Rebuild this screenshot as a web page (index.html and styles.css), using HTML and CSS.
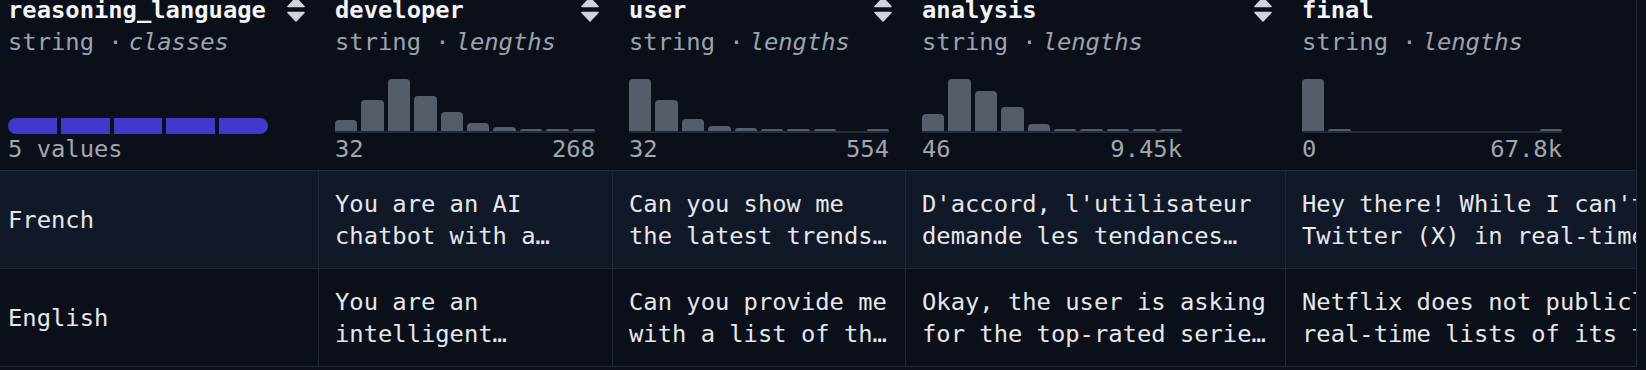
FILE: index.html
```html
<!DOCTYPE html>
<html lang="en">
<head>
    <meta charset="UTF-8">
    <meta name="viewport" content="width=device-width, initial-scale=1.0">
    <title>Dataset Viewer</title>
    <link rel="stylesheet" href="styles.css">
</head>
<body>
    <div class="viewer">
        <div class="table">
            <!-- header -->
            <div class="th first">
                <div class="th-top">
                    <span class="col-name">reasoning_language</span>
                    <svg class="sort" viewBox="0 0 18 25"><path d="M9 1 L17 9.5 L1 9.5 Z"/><path d="M1 15.5 L17 15.5 L9 24 Z"/></svg>
                </div>
                <div class="col-type">string <span class="sep">·</span><em>classes</em></div>
                <div class="chart classes">
                    <div class="class-bar">
                        <span></span><span></span><span></span><span></span><span></span>
                    </div>
                </div>
                <div class="range"><span>5 values</span></div>
            </div>

            <div class="th">
                <div class="th-top">
                    <span class="col-name">developer</span>
                    <svg class="sort" viewBox="0 0 18 25"><path d="M9 1 L17 9.5 L1 9.5 Z"/><path d="M1 15.5 L17 15.5 L9 24 Z"/></svg>
                </div>
                <div class="col-type">string <span class="sep">·</span><em>lengths</em></div>
                <div class="chart hist">
                    <div class="bar" style="height:11px"></div>
                    <div class="bar" style="height:31px"></div>
                    <div class="bar" style="height:52px"></div>
                    <div class="bar" style="height:35px"></div>
                    <div class="bar" style="height:19px"></div>
                    <div class="bar" style="height:8px"></div>
                    <div class="bar" style="height:4px"></div>
                    <div class="bar" style="height:2px"></div>
                    <div class="bar" style="height:2px"></div>
                    <div class="bar" style="height:2px"></div>
                </div>
                <div class="range"><span>32</span><span>268</span></div>
            </div>

            <div class="th">
                <div class="th-top">
                    <span class="col-name">user</span>
                    <svg class="sort" viewBox="0 0 18 25"><path d="M9 1 L17 9.5 L1 9.5 Z"/><path d="M1 15.5 L17 15.5 L9 24 Z"/></svg>
                </div>
                <div class="col-type">string <span class="sep">·</span><em>lengths</em></div>
                <div class="chart hist">
                    <div class="bar" style="height:52px"></div>
                    <div class="bar" style="height:31px"></div>
                    <div class="bar" style="height:12px"></div>
                    <div class="bar" style="height:5px"></div>
                    <div class="bar" style="height:3px"></div>
                    <div class="bar" style="height:2px"></div>
                    <div class="bar" style="height:2px"></div>
                    <div class="bar" style="height:2px"></div>
                    <div class="bar" style="height:0px"></div>
                    <div class="bar" style="height:2px"></div>
                </div>
                <div class="range"><span>32</span><span>554</span></div>
            </div>

            <div class="th">
                <div class="th-top">
                    <span class="col-name">analysis</span>
                    <svg class="sort" viewBox="0 0 18 25"><path d="M9 1 L17 9.5 L1 9.5 Z"/><path d="M1 15.5 L17 15.5 L9 24 Z"/></svg>
                </div>
                <div class="col-type">string <span class="sep">·</span><em>lengths</em></div>
                <div class="chart hist">
                    <div class="bar" style="height:17px"></div>
                    <div class="bar" style="height:52px"></div>
                    <div class="bar" style="height:40px"></div>
                    <div class="bar" style="height:24px"></div>
                    <div class="bar" style="height:7px"></div>
                    <div class="bar" style="height:2px"></div>
                    <div class="bar" style="height:2px"></div>
                    <div class="bar" style="height:2px"></div>
                    <div class="bar" style="height:2px"></div>
                    <div class="bar" style="height:2px"></div>
                </div>
                <div class="range"><span>46</span><span>9.45k</span></div>
            </div>

            <div class="th">
                <div class="th-top">
                    <span class="col-name">final</span>
                    <svg class="sort" viewBox="0 0 18 25"><path d="M9 1 L17 9.5 L1 9.5 Z"/><path d="M1 15.5 L17 15.5 L9 24 Z"/></svg>
                </div>
                <div class="col-type">string <span class="sep">·</span><em>lengths</em></div>
                <div class="chart hist">
                    <div class="bar" style="height:52px"></div>
                    <div class="bar" style="height:2px"></div>
                    <div class="bar" style="height:0px"></div>
                    <div class="bar" style="height:0px"></div>
                    <div class="bar" style="height:0px"></div>
                    <div class="bar" style="height:0px"></div>
                    <div class="bar" style="height:0px"></div>
                    <div class="bar" style="height:0px"></div>
                    <div class="bar" style="height:0px"></div>
                    <div class="bar" style="height:2px"></div>
                </div>
                <div class="range"><span>0</span><span>67.8k</span></div>
            </div>

            <!-- row 1 -->
            <div class="td first odd"><div class="clamp">French</div></div>
            <div class="td odd"><div class="clamp">You are an AI chatbot with a specific personality and tone.</div></div>
            <div class="td odd"><div class="clamp">Can you show me the latest trends on Twitter right now?</div></div>
            <div class="td odd"><div class="clamp">D'accord, l'utilisateur demande les tendances actuelles sur Twitter.</div></div>
            <div class="td odd"><div class="clamp">Hey there! While I can't check Twitter (X) in real-time, here is what I know.</div></div>

            <!-- row 2 -->
            <div class="td first"><div class="clamp">English</div></div>
            <div class="td"><div class="clamp">You are an intelligent assistant that answers questions.</div></div>
            <div class="td"><div class="clamp">Can you provide me with a list of the top rated series on Netflix?</div></div>
            <div class="td"><div class="clamp">Okay, the user is asking for the top-rated series on Netflix right now.</div></div>
            <div class="td"><div class="clamp">Netflix does not publicly post real-time lists of its top shows.</div></div>
        </div>
    </div>
</body>
</html>
```

FILE: styles.css
```css
* {
    margin: 0;
    padding: 0;
    box-sizing: border-box;
}

body {
    background: #0b0f19;
    color: #e5e7eb;
    font-family: 'DejaVu Sans Mono', 'Liberation Mono', monospace;
    font-size: 23.8px;
    overflow: hidden;
}

.viewer {
    width: 1637px;
    overflow: hidden;
    border-right: 1px solid #1f2937;
}

.table {
    display: grid;
    grid-template-columns: 318px 294px 293px 380px 480px;
    grid-template-rows: 171px 98px 98px;
    width: max-content;
}

/* header cells */
.th {
    padding: 0 13px 0 17px;
    border-bottom: 1px solid #1f2937;
}

.th.first {
    padding-left: 8px;
}

.th-top {
    display: flex;
    justify-content: space-between;
    align-items: flex-start;
    height: 20px;
}

.col-name {
    font-weight: bold;
    color: #f3f4f6;
    line-height: 20px;
}

.sort {
    width: 18px;
    height: 25px;
    margin-top: -3px;
    fill: #d1d5db;
    stroke: #d1d5db;
    stroke-width: 1.5;
    stroke-linejoin: round;
}

.col-type {
    margin-top: 6px;
    line-height: 32px;
    color: #9ca3af;
    white-space: nowrap;
}

.col-type em {
    font-style: italic;
}

.sep {
    margin-right: 6px;
}

.chart {
    width: 260px;
    height: 75px;
}

.hist {
    display: flex;
    align-items: flex-end;
    gap: 4px;
    border-bottom: 2px solid #232b3a;
}

.bar {
    flex: 1;
    background: #565d6a;
    border-radius: 4px 4px 0 0;
}

.classes {
    display: flex;
    align-items: flex-end;
}

.class-bar {
    display: flex;
    gap: 4px;
    width: 260px;
    height: 16px;
    margin-bottom: -1px;
}

.class-bar span {
    flex: 1;
    background: #4338ca;
}

.class-bar span:first-child {
    border-radius: 8px 0 0 8px;
}

.class-bar span:last-child {
    border-radius: 0 8px 8px 0;
}

.range {
    display: flex;
    justify-content: space-between;
    width: 260px;
    line-height: 32px;
    color: #a1a6b0;
}

/* body cells */
.td {
    display: flex;
    align-items: center;
    padding: 17px 12px 16px 16px;
    border-left: 1px solid #1f2937;
    border-bottom: 1px solid #1f2937;
    background: #0b0f19;
}

.td.first {
    border-left: none;
    padding-left: 8px;
}

.td.odd {
    background: #111827;
}

.clamp {
    display: -webkit-box;
    -webkit-line-clamp: 2;
    -webkit-box-orient: vertical;
    overflow: hidden;
    line-height: 32px;
    width: 100%;
}
```
